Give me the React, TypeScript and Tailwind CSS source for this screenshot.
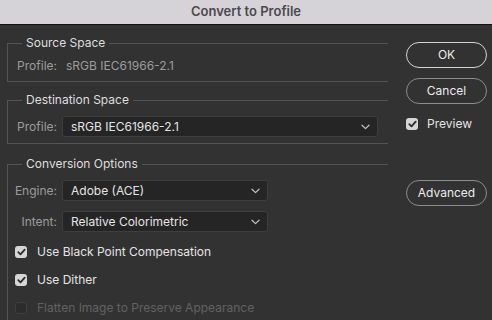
import React from 'react';

const font = { fontFamily: 'Inter, "Noto Sans", sans-serif' };

const Chevron = () => (
  <svg width="9" height="6" viewBox="0 0 9 6" className="shrink-0">
    <path d="M1 1.2 L4.5 4.6 L8 1.2" fill="none" stroke="#bdbdbd" strokeWidth="1.3" strokeLinecap="round" strokeLinejoin="round" />
  </svg>
);

const Select: React.FC<{ value: string; width: string }> = ({ value, width }) => (
  <div className={`${width} h-[21px] flex items-center justify-between pl-2 pr-[7px] rounded-[3px] bg-[#252525] border border-[#3e3e3e] text-[12px] text-[#e4e4e4]`}>
    <span>{value}</span>
    <Chevron />
  </div>
);

const Row: React.FC<{ label: string; children: React.ReactNode; className?: string }> = ({ label, children, className = '' }) => (
  <div className={`flex items-center ${className}`}>
    <span className="w-[49px] text-right text-[12px] text-[#9c9c9c] mr-[5px]">{label}</span>
    {children}
  </div>
);

const Check: React.FC<{ checked?: boolean; disabled?: boolean }> = ({ checked, disabled }) => (
  <div
    className={`w-[12px] h-[12px] rounded-[3px] flex items-center justify-center shrink-0 ${
      disabled ? 'bg-[#2c2c2c] border border-[#3f3f3f]' : 'bg-[#d6d6d6]'
    }`}
  >
    {checked && (
      <svg width="9" height="8" viewBox="0 0 9 8">
        <path d="M1.3 4.2 L3.5 6.3 L7.7 1.6" fill="none" stroke="#2b2b2b" strokeWidth="1.8" strokeLinecap="round" strokeLinejoin="round" />
      </svg>
    )}
  </div>
);

const Group: React.FC<{ title: string; className?: string; children: React.ReactNode }> = ({ title, className = '', children }) => (
  <fieldset className={`border-l border-t border-[#545454] ${className}`}>
    <legend className="ml-[14px] px-1 text-[12px] leading-4 text-[#dedede]">{title}</legend>
    {children}
  </fieldset>
);

const PillButton: React.FC<{ label: string; primary?: boolean; className?: string }> = ({ label, primary, className = '' }) => (
  <button
    className={`w-[81px] h-[26px] rounded-full border text-[12px] text-[#ececec] flex items-center justify-center ${
      primary ? 'border-[#d4d4d4]' : 'border-[#8c8c8c]'
    } ${className}`}
  >
    {label}
  </button>
);

export default function App() {
  return (
    <div className="w-[492px] h-[320px] overflow-hidden bg-[#323232] flex flex-col" style={font}>
      {/* title bar */}
      <div className="h-[25px] shrink-0 bg-[#d5d3d8] border-b border-[#141414] flex items-center justify-center">
        <span className="text-[13px] font-semibold text-[#4a4a4a]">Convert to Profile</span>
      </div>

      <div className="flex flex-1 pl-[7px] pt-[10px]">
        {/* left column */}
        <div className="w-[381px] flex flex-col">
          <Group title="Source Space" className="border-b pt-[7px] pb-[7px]">
            <div className="flex items-center h-4 text-[12px] text-[#9c9c9c]">
              <span className="w-[49px] text-right">Profile:</span>
              <span className="ml-[9px]">sRGB IEC61966-2.1</span>
            </div>
          </Group>

          <Group title="Destination Space" className="border-b mt-[10px] pt-[8px] pb-[6px]">
            <Row label="Profile:">
              <Select value="sRGB IEC61966-2.1" width="w-[316px]" />
            </Row>
          </Group>

          <Group title="Conversion Options" className="flex-1 mt-[12px] pt-[8px]">
            <Row label="Engine:">
              <Select value="Adobe (ACE)" width="w-[206px]" />
            </Row>
            <Row label="Intent:" className="mt-[10px]">
              <Select value="Relative Colorimetric" width="w-[206px]" />
            </Row>
            <div className="flex flex-col gap-[12px] mt-[12px] pl-[7px]">
              <label className="flex items-center h-4 text-[12px] text-[#e4e4e4]">
                <Check checked />
                <span className="ml-[10px]">Use Black Point Compensation</span>
              </label>
              <label className="flex items-center h-4 text-[12px] text-[#e4e4e4]">
                <Check checked />
                <span className="ml-[10px]">Use Dither</span>
              </label>
              <label className="flex items-center h-4 text-[12px] text-[#626262]">
                <Check disabled />
                <span className="ml-[10px]">Flatten Image to Preserve Appearance</span>
              </label>
            </div>
          </Group>
        </div>

        {/* right column */}
        <div className="ml-[18px] flex flex-col pt-[7px]">
          <PillButton label="OK" primary />
          <PillButton label="Cancel" className="mt-[10px]" />
          <label className="flex items-center mt-[12px] h-4 text-[12px] text-[#e4e4e4]">
            <Check checked />
            <span className="ml-[9px]">Preview</span>
          </label>
          <PillButton label="Advanced" className="mt-[48px]" />
        </div>
      </div>
    </div>
  );
}
